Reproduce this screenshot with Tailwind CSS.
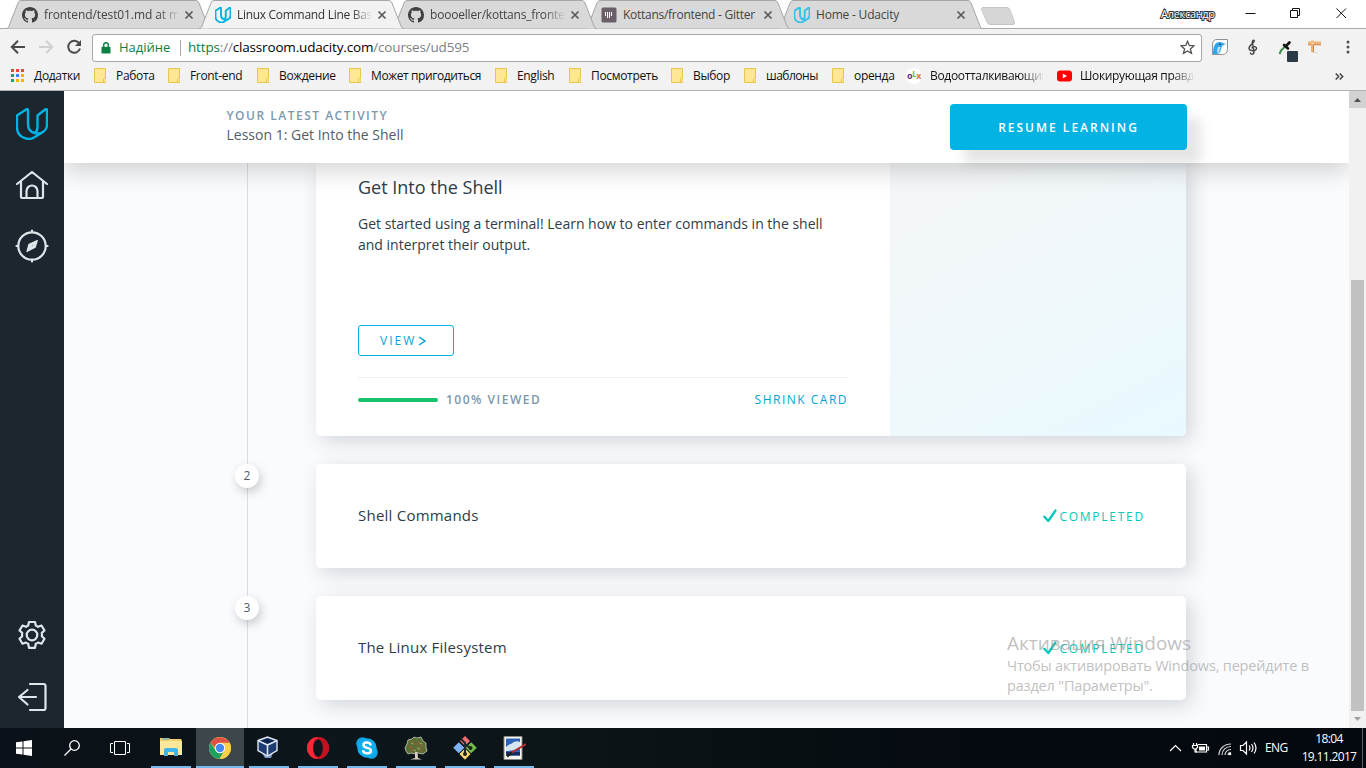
<!DOCTYPE html>
<html lang="uk">
<head>
<meta charset="utf-8">
<title>Linux Command Line Basics</title>
<script src="https://cdn.jsdelivr.net/npm/@tailwindcss/browser@4"></script>
</head>
<body class="w-[1366px] h-[768px] overflow-hidden font-['Open_Sans','Noto_Sans',sans-serif] bg-white text-black">
<svg class="hidden">
  <defs>
    <symbol id="tab" viewBox="0 0 205 29"><path d="M0 28.5 C2 28.5 2 28 3 26 L12 3 Q13 .5 15 .5 H190 Q192 .5 193 3 L202 26 C203 28 203 28.500 205 28.500" stroke="#a6a6a6"/></symbol>
    <symbol id="x" viewBox="0 0 10 10"><path d="M1.500 1.500 L8.500 8.500 M8.500 1.500 L1.500 8.500" stroke="#5a5a5a" stroke-width="1.700" fill="none"/></symbol>
    <symbol id="gh" viewBox="0 0 16 16"><path fill="#404040" d="M8 0C3.580 0 0 3.580 0 8c0 3.540 2.290 6.530 5.470 7.590.4.070.55-.17.55-.38 0-.19-.01-.82-.01-1.490-2.010.37-2.530-.49-2.690-.94-.09-.23-.48-.94-.82-1.130-.28-.15-.68-.52-.01-.53.63-.01 1.080.58 1.230.82.72 1.210 1.870.87 2.330.66.070-.52.28-.87.51-1.070-1.780-.2-3.640-.89-3.640-3.950 0-.87.31-1.590.82-2.150-.08-.2-.36-1.020.08-2.120 0 0 .67-.21 2.200.82.64-.18 1.320-.27 2-.27s1.360.09 2 .27c1.530-1.040 2.200-.82 2.200-.82.44 1.100.16 1.920.08 2.120.51.56.82 1.270.82 2.150 0 3.070-1.870 3.750-3.650 3.950.29.25.54.73.54 1.480 0 1.070-.01 1.930-.01 2.200 0 .21.15.46.55.38A8.010 8.010 0 0 0 16 8c0-4.420-3.580-8-8-8z"/></symbol>
    <symbol id="ud" viewBox="0 0 32 32"><path fill="none" stroke-linejoin="round" d="M1 7.500 L10.500 1.200 Q12 .6 12 2.200 V16 C12 21 14.500 24 18.500 25 C20.500 24 21.500 22 21.500 19 V7.500 L29.500 1.200 Q31 .6 31 2.200 V17 C31 20 29.500 22.500 27 24 L18 29.500 C15.500 31 12 31.300 9 30.200 C4 28.500 1 24.500 1 19.500 Z M18.500 25 C22 25.800 25 25.300 27 24"/></symbol>
    <symbol id="folder" viewBox="0 0 12 15"><path d="M.5 .5 H11.500 V10 L12 11 V14.500 H.5 Z" fill="#ffe793" stroke="#e9c54c"/><path d="M9.500 14 V11 Q9.500 10 11.500 10" fill="#fff0b5" stroke="#e9c54c"/></symbol>
    <symbol id="check" viewBox="0 0 14 14"><path d="M1.300 7.800 L5.300 12 L12.500 1.500" fill="none" stroke="#02c8ba" stroke-width="2.300" stroke-linecap="round" stroke-linejoin="round"/></symbol>
  </defs>
</svg>
<div class="relative flex h-full flex-col">

  <!-- Tab strip -->
  <div class="relative flex h-[29px] shrink-0 bg-white pl-[6px] text-[12px] text-[#444]">
    <div class="absolute inset-x-0 bottom-0 h-px bg-[#a9a9a9]"></div>
    <div class="relative z-[5] flex w-[193px] items-center pl-4">
      <svg class="absolute left-0 top-0 h-[29px] w-[205px]" fill="#d9d9d9"><use href="#tab"/></svg>
      <svg class="relative size-4 shrink-0"><use href="#gh"/></svg>
      <span class="relative ml-1.5 w-[134px] overflow-hidden whitespace-nowrap tracking-[-0.1px] [mask-image:linear-gradient(90deg,#000_114px,transparent_136px)]">frontend/test01.md at master</span>
      <svg class="relative ml-[6px] size-[10px] shrink-0"><use href="#x"/></svg>
    </div>
    <div class="relative z-[9] flex w-[193px] items-center pl-4 text-[#333]">
      <svg class="absolute left-0 top-0 h-[29px] w-[205px]" fill="#f2f2f2"><use href="#tab"/></svg>
      <svg class="relative size-4 shrink-0" stroke="#02b3e4" stroke-width="3.800"><use href="#ud"/></svg>
      <span class="relative ml-1.5 w-[134px] overflow-hidden whitespace-nowrap tracking-[-0.3px] [mask-image:linear-gradient(90deg,#000_114px,transparent_136px)]">Linux Command Line Basics</span>
      <svg class="relative ml-[6px] size-[10px] shrink-0"><use href="#x"/></svg>
    </div>
    <div class="relative z-[4] flex w-[193px] items-center pl-4">
      <svg class="absolute left-0 top-0 h-[29px] w-[205px]" fill="#d9d9d9"><use href="#tab"/></svg>
      <svg class="relative size-4 shrink-0"><use href="#gh"/></svg>
      <span class="relative ml-1.5 w-[134px] overflow-hidden whitespace-nowrap tracking-[-0.2px] [mask-image:linear-gradient(90deg,#000_114px,transparent_136px)]">boooeller/kottans_frontend</span>
      <svg class="relative ml-[6px] size-[10px] shrink-0"><use href="#x"/></svg>
    </div>
    <div class="relative z-[3] flex w-[193px] items-center pl-4">
      <svg class="absolute left-0 top-0 h-[29px] w-[205px]" fill="#d9d9d9"><use href="#tab"/></svg>
      <svg class="relative size-4 shrink-0" viewBox="0 0 16 16"><rect x=".5" y=".5" width="15" height="15" rx="1.500" fill="#6b5f69"/><path d="M4.500 5V9 M6.500 5V11 M8.500 5V11 M10.500 5V9" stroke="#fff"/></svg>
      <span class="relative ml-1.5 w-[134px] overflow-hidden whitespace-nowrap tracking-[-0.27px]">Kottans/frontend - Gitter</span>
      <svg class="relative ml-[6px] size-[10px] shrink-0"><use href="#x"/></svg>
    </div>
    <div class="relative z-[2] flex w-[205px] items-center pl-4">
      <svg class="absolute left-0 top-0 h-[29px] w-[205px]" fill="#d9d9d9"><use href="#tab"/></svg>
      <svg class="relative size-4 shrink-0" stroke="#35c0ea" stroke-width="3.800"><use href="#ud"/></svg>
      <span class="relative ml-1.5 w-[134px] overflow-hidden whitespace-nowrap tracking-[-0.2px]">Home - Udacity</span>
      <svg class="relative ml-[6px] size-[10px] shrink-0"><use href="#x"/></svg>
    </div>
    <svg class="mt-[7px] -ml-[2px] h-[18px] w-[35px]" viewBox="0 0 35 18"><path d="M2 .5 H26 Q28 .5 29 3 L33.500 15 Q34 17.500 32 17.500 H9 Q7 17.500 6 15 L.8 3 Q0 .5 2 .5Z" fill="#d6d6d6" stroke="#c6c6c6"/></svg>
    <div class="ml-[145px] mt-[6px] h-4 w-[56px] text-[11px] leading-4 tracking-[-0.3px] text-white [-webkit-text-stroke:2px_#333] [paint-order:stroke_fill]">Александр</div>
    <svg class="ml-[28px] mt-[7px] h-3 w-[104px]" viewBox="0 0 104 12" fill="none" stroke="#111"><path d="M.5 6.500H10.500 M45.500 3.500h7v7h-7z M47.500 3V1.500h7v7H53 M91.500 1.500l9.500 9.500 M101 1.500l-9.500 9.500"/></svg>
  </div>

  <!-- Address bar -->
  <div class="flex h-[37px] shrink-0 items-center bg-[#f2f2f2] pl-[10px]">
    <svg class="-mt-[2px] h-4 w-[72px]" viewBox="0 0 72 16" fill="none" stroke-width="2"><path d="M15 8H2 M8 1.800 L1.800 8 L8 14.200" stroke="#4a4a4a"/><path d="M29 8H42 M36 1.800 L42.200 8 L36 14.200" stroke="#d0d0d0"/><path d="M69.300 4.500 A6 6 0 1 0 70 9.500" stroke="#4a4a4a"/><path d="M71 1 V7 H65Z" fill="#4a4a4a"/></svg>
    <div class="ml-[10px] flex h-[28px] w-[1110px] items-center rounded-[3px] border border-[#a8a8a8] bg-white text-[13.5px]">
      <svg class="ml-[8px] h-3 w-[10px]" viewBox="0 0 10 12"><path d="M2.700 5V3a2.300 2.300 0 0 1 4.600 0v2" fill="none" stroke="#0b8043" stroke-width="1.400"/><path d="M.5 4.800h9V11.500H.5z" fill="#0b8043"/></svg>
      <span class="ml-2 w-[52px] whitespace-nowrap text-[13px] text-[#0b8043]">Надійне</span>
      <span class="ml-[9px] h-4 w-px bg-[#aaa]"></span>
      <span class="ml-[7px] whitespace-nowrap tracking-[-0.17px] text-black"><span class="text-[#0b8043]">https</span><span class="text-[#808080]">://</span>classroom.udacity.com<span class="text-[#808080]">/courses/ud595</span></span>
      <svg class="ml-auto mr-[6px] size-[15px]" viewBox="0 0 15 15"><path d="M7.500 1.300 L9.300 5.500 L13.900 5.900 L10.400 8.900 L11.500 13.400 L7.500 11 L3.500 13.400 L4.600 8.900 L1.100 5.900 L5.700 5.500Z" fill="none" stroke="#505050" stroke-width="1.300"/></svg>
    </div>
    <svg class="ml-[9px] -mt-[2px] size-[18px]" viewBox="0 0 18 18"><path d="M6 1.500H16.500V11.500Q16 16.500 11.500 16.500H1.500V6Q2 1.500 6 1.500Z" fill="#fff" stroke="#8a9399"/><path d="M2 16 C2 8 4 4 8.500 4 C11 4 12 5.500 15.500 6 C12.500 6.500 11 7.500 10.500 9.500 C10 13 8.500 15 7 16 Z" fill="#35a5e8"/><path d="M7 9 Q9 8.500 9.500 9 Q9 13 6.500 16 Q5.500 12 7 9Z" fill="#bfe2f5"/><circle cx="9" cy="6.300" r=".8" fill="#123"/></svg>
    <svg class="ml-[18px] -mt-[2px] h-4 w-3" viewBox="0 0 12 16" fill="none" stroke="#444" stroke-width="1.400"><path d="M5.500 5.500 C4.500 2 6.500 .3 7.200 1.500 C8 4 2 6 2 9 C2 12.500 9.500 12.500 9.500 9.500 C9.500 7 5 7 5 9.500 M5.700 5 L7 13 C7 16 3 15.500 3.500 13.500"/></svg>
    <svg class="ml-[19px] mt-1.5 h-[22px] w-[22px]" viewBox="0 0 22 22"><path d="M1.500 14 L3 10.500 L8.500 5" stroke="#3f8a50" stroke-width="2" fill="none"/><path d="M6 5 L10 8.500 M8.500 5.500 L11.500 2.500" stroke="#111" stroke-width="2.600" stroke-linecap="round"/><rect x="9" y="11" width="11" height="11" rx="1" fill="#2b3a47"/></svg>
    <svg class="ml-[7px] -mt-[2px] size-[15px]" viewBox="0 0 15 15"><path d="M1 2.500h3V1.500h3v1h7v3.500H7V13H4V6H1z" fill="#eeb277"/><path d="M1 5.800h3M7 5.800h7M6.500 6v7" stroke="#cf8a4c"/><circle cx="5.500" cy="4" r="1" fill="#fbdcb6"/><path d="M5 13.500h5" stroke="#ddd5cc"/></svg>
    <svg class="ml-[24px] -mt-[1px] h-[14px] w-1" viewBox="0 0 4 14" fill="#505050"><circle cx="2" cy="2" r="1.500"/><circle cx="2" cy="7" r="1.500"/><circle cx="2" cy="12" r="1.500"/></svg>
  </div>

  <!-- Bookmarks -->
  <div class="flex h-[25px] shrink-0 border-b border-[#b2b2b2] bg-[#f2f2f2] pb-[5px] pl-[11px] text-[12px] leading-[19px] tracking-[-0.33px] whitespace-nowrap text-[#111]">
    <div class="flex w-[83px] items-center"><svg class="h-[13px] w-[13px]" viewBox="0 0 13 13"><path d="M0 1.500h3m2 0h3m2 0h3" stroke="#e8453c" stroke-width="3"/><path d="M0 6.500h3M0 11.500h3" stroke="#1da261" stroke-width="3"/><path d="M5 6.500h3" stroke="#4285f4" stroke-width="3"/><path d="M10 6.500h3M5 11.500h3m2 0h3" stroke="#f4b400" stroke-width="3"/></svg><span class="ml-[10px]">Додатки</span></div>
    <div class="flex w-[74px] items-center gap-[10px]"><svg class="h-[15px] w-3"><use href="#folder"/></svg>Работа</div>
    <div class="flex w-[89px] items-center gap-[10px]"><svg class="h-[15px] w-3"><use href="#folder"/></svg>Front-end</div>
    <div class="flex w-[92px] items-center gap-[10px]"><svg class="h-[15px] w-3"><use href="#folder"/></svg>Вождение</div>
    <div class="flex w-[146px] items-center gap-[10px] tracking-[-0.4px]"><svg class="h-[15px] w-3"><use href="#folder"/></svg>Может пригодиться</div>
    <div class="flex w-[74px] items-center gap-[10px]"><svg class="h-[15px] w-3"><use href="#folder"/></svg>English</div>
    <div class="flex w-[102px] items-center gap-[10px]"><svg class="h-[15px] w-3"><use href="#folder"/></svg>Посмотреть</div>
    <div class="flex w-[73px] items-center gap-[10px]"><svg class="h-[15px] w-3"><use href="#folder"/></svg>Выбор</div>
    <div class="flex w-[88px] items-center gap-[10px] tracking-[-0.5px]"><svg class="h-[15px] w-3"><use href="#folder"/></svg>шаблоны</div>
    <div class="flex w-[74px] items-center gap-[10px]"><svg class="h-[15px] w-3"><use href="#folder"/></svg>оренда</div>
    <div class="flex w-[151px] items-center"><span class="flex size-4 items-center justify-center rounded-full bg-white text-[9px] font-bold tracking-[-0.4px]"><span class="text-[#612c8c]">o</span><span class="-mt-1 text-[8px] text-[#7db928]">L</span><span class="text-[#f17723]">x</span></span><span class="ml-2 w-[113px] overflow-hidden [mask-image:linear-gradient(90deg,#000_92px,transparent_115px)]">Водоотталкивающий</span></div>
    <div class="flex w-[278px] items-center"><svg class="h-3 w-[15px]" viewBox="0 0 15 12"><rect y=".5" width="15" height="11" rx="3" fill="#f00"/><path d="M5.800 3.500v5L10 6z" fill="#fff"/></svg><span class="ml-2 w-[113px] overflow-hidden [mask-image:linear-gradient(90deg,#000_92px,transparent_115px)]">Шокирующая правда</span></div>
    <svg class="mt-[7px] h-[7px] w-[9px]" viewBox="0 0 9 7" fill="none" stroke="#444" stroke-width="1.500"><path d="M.7.5l3 3-3 3 M4.700.5l3 3-3 3"/></svg>
  </div>

  <!-- Page -->
  <div class="flex h-[637px] shrink-0">
    <nav class="flex w-16 shrink-0 flex-col items-center bg-[#1c262e] text-[#dfe6ea]">
      <svg class="mt-[17px] size-8 overflow-visible" stroke="#02b3e4" stroke-width="2.400"><use href="#ud"/></svg>
      <svg class="mt-[30px] h-[30px] w-[34px]" viewBox="0 0 34 30" fill="none" stroke="currentColor" stroke-width="2.200" stroke-linecap="round" stroke-linejoin="round"><path d="M2 14 L17 2 L32 14 M6 11.500 V27 Q6 28 7 28 H27 Q28 28 28 27 V11.500 M11.500 28 V21 a5.500 5.500 0 0 1 11 0 V28"/></svg>
      <svg class="mt-[29px] size-[34px]" viewBox="0 0 34 34" fill="none" stroke="currentColor" stroke-width="2.200" stroke-linecap="round"><circle cx="17" cy="17" r="13.700"/><path d="M17 1.500V3M17 31v1.500M1.500 17H3M31 17h1.500"/><path fill-rule="evenodd" d="M22.300 11.500 L20.200 18.300 L12 22.500 L14 15.200Z M19 15.200 L15.800 16.500 L17.800 18.300Z" fill="currentColor" stroke-linejoin="round" stroke-width="1.200"/></svg>
      <svg class="mt-auto mb-[32px] size-[30px]" viewBox="0 0 30 30" fill="none" stroke="currentColor" stroke-width="2.200" stroke-linejoin="round"><path d="M12 2 h6 l.8 3.500 q1.200 .5 2.200 1.300 l3.500 -1.300 l3 5 l-2.700 2.300 q.4 2 0 3.400 l2.700 2.500 l-3 5 l-3.500 -1.200 q-1 .8 -2.200 1.300 l-.8 4 h-6 l-.8 -4 q-1.200 -.5 -2.200 -1.300 l-3.500 1.200 l-3 -5 l2.700 -2.500 q-.4 -1.700 0 -3.400 l-2.700 -2.300 l3 -5 l3.500 1.300 q1 -.8 2.200 -1.300Z"/><circle cx="15" cy="15" r="5.300"/></svg>
      <svg class="mb-[16px] size-[30px]" viewBox="0 0 30 30" fill="none" stroke="currentColor" stroke-width="2.200" stroke-linecap="round" stroke-linejoin="round"><path d="M13 2H26.500Q28.500 2 28.500 4V26Q28.500 28 26.500 28H13 M19 15H2 M10.500 8 L2 15 L10.500 22.500"/></svg>
    </nav>

    <main class="flex min-w-0 flex-1 flex-col overflow-hidden bg-[#fafbfd]">
      <header class="relative z-10 flex h-[72px] shrink-0 justify-between bg-white pl-[162.5px] pr-[162px] shadow-[0_8px_24px_rgba(0,0,0,0.17)]">
        <div class="pt-[17px]">
          <div class="text-[12px] leading-4 font-semibold tracking-[1.5px] text-[#7d97ad]">YOUR LATEST ACTIVITY</div>
          <div class="mt-[1px] text-[14px] leading-5 text-[#525c65]">Lesson 1: Get Into the Shell</div>
        </div>
        <div class="mt-[13px] flex h-[46px] w-[237px] items-center justify-center rounded-[4px] bg-[#02b3e4] pt-[1px] text-[12px] font-semibold tracking-[2px] text-white shadow-[14px_14px_12px_rgba(0,0,0,0.1)]">RESUME LEARNING</div>
      </header>
      <div class="flex flex-1">
        <div class="relative ml-[171px] flex w-6 flex-col items-center">
          <div class="absolute inset-y-0 left-[12px] w-px bg-[#dbdee1]"></div>
          <div class="relative mt-[301px] flex size-6 items-center justify-center rounded-full bg-white text-[12px] text-[#525c65] shadow-[2px_4px_10px_rgba(46,60,73,0.25)]">2</div>
          <div class="relative mt-[108px] flex size-6 items-center justify-center rounded-full bg-white text-[12px] text-[#525c65] shadow-[2px_4px_10px_rgba(46,60,73,0.25)]">3</div>
        </div>
        <div class="ml-[57px] flex w-[870px] flex-col gap-7">
          <section class="flex h-[273px] overflow-hidden rounded-b-[5px] bg-white shadow-[5px_5px_20px_rgba(46,60,73,0.2)]">
            <div class="flex w-[574px] flex-col pl-[42px] pr-[42px]">
              <h2 class="mt-[12px] text-[18px] leading-6 text-[#2e3d49]">Get Into the Shell</h2>
              <p class="mt-[14px] w-[490px] text-[14px] leading-[21px] text-[#2e3d49]">Get started using a terminal! Learn how to enter commands in the shell<br>and interpret their output.</p>
              <div class="mt-[70px] flex h-[31px] w-24 items-center rounded-[3px] border border-[#02b3e4] pl-[21px] text-[12px] font-medium tracking-[2px] text-[#02a4d8]">VIEW<svg class="ml-[2px] mt-[1px] h-[10px] w-[8px]" viewBox="0 0 8 10"><path d="M1 1l6 4-6 4" fill="none" stroke="#02a4d8" stroke-width="1.500"/></svg></div>
              <div class="mt-[21px] flex w-[490px] items-center border-t border-[#edeff1] pt-[14px] text-[12px] leading-4 tracking-[1.5px]">
                <span class="h-1 w-20 rounded-full bg-[#15c26b]"></span>
                <span class="ml-2 font-semibold text-[#7d97ad]">100% VIEWED</span>
                <span class="ml-auto text-[#02a4d8]">SHRINK CARD</span>
              </div>
            </div>
            <div class="flex-1 bg-[linear-gradient(152deg,#f5f7f8_0%,#f0f7fa_45%,#eef8fb_60%,#e8f9ff_100%)]"></div>
          </section>
          <section class="flex h-[104px] items-center justify-between rounded-[5px] bg-white px-[42px] shadow-[5px_5px_20px_rgba(46,60,73,0.2)]">
            <h2 class="-mt-[2px] text-[15px] tracking-[0.23px] text-[#2e3d49]">Shell Commands</h2>
            <div class="flex items-center gap-[2px] text-[12px] tracking-[1.75px] text-[#02c8ba]"><svg class="size-[14px]"><use href="#check"/></svg><span class="-mr-[1px] mt-[1px] font-medium">COMPLETED</span></div>
          </section>
          <section class="flex h-[104px] items-center justify-between rounded-[5px] bg-white px-[42px] shadow-[5px_5px_20px_rgba(46,60,73,0.2)]">
            <h2 class="-mt-[2px] text-[15px] tracking-[0.2px] text-[#2e3d49]">The Linux Filesystem</h2>
            <div class="flex items-center gap-[2px] text-[12px] tracking-[1.75px] text-[#02c8ba]"><svg class="size-[14px]"><use href="#check"/></svg><span class="-mr-[1px] mt-[1px] font-medium">COMPLETED</span></div>
          </section>
        </div>
      </div>
    </main>

    <!-- Scrollbar -->
    <div class="flex w-[17px] shrink-0 flex-col items-center bg-[#f1f1f1]">
      <div class="flex h-[17px] w-full items-center justify-center bg-[#d2d2d2]"><svg class="h-1 w-[7px]" viewBox="0 0 7 4"><path d="M0 4L3.500 0 7 4z" fill="#505050"/></svg></div>
      <div class="mt-[172px] h-[431px] w-[13px] bg-[#c1c1c1]"></div>
      <svg class="mt-[6px] h-1 w-[7px]" viewBox="0 0 7 4"><path d="M0 0L3.500 4 7 0z" fill="#a0a0a0"/></svg>
    </div>
  </div>

  <!-- Taskbar -->
  <div class="flex h-10 shrink-0 bg-[linear-gradient(90deg,#0a1118_0%,#0c161b_25%,#0c1518_40%,#050b10_70%,#03090e_100%)] text-white">
    <div class="flex w-12 items-center justify-center"><svg class="size-4" viewBox="0 0 16 16" fill="#fff"><path d="M0 2.300L6.500 1.400V7.500H0zM7.500 1.200L16 0V7.500H7.500zM0 8.500H6.500V14.600L0 13.700zM7.500 8.500H16V16L7.500 14.800z"/></svg></div>
    <div class="flex w-12 items-center justify-center"><svg class="size-4" viewBox="0 0 16 16" fill="none" stroke="#fff" stroke-width="1.300"><circle cx="10.500" cy="5.500" r="4.800"/><path d="M7 9L.5 15.500"/></svg></div>
    <div class="flex w-12 items-center justify-center"><svg class="h-[14px] w-5" viewBox="0 0 20 14" fill="none" stroke="#fff"><path d="M4.500.5h11v13h-11z M3 2.500H.5v9H3 M17 2.500h2.500v9H17"/></svg></div>
    <div class="flex flex-1">
      <div class="ml-[7px] flex h-10 w-10 items-center justify-center border-b-2 border-[#76b9ed]"><svg class="size-[22px]" viewBox="0 0 22 22"><path d="M0 2h9l1 1h11.500v16H0z" fill="#f5cf69"/><path d="M0 5h22v14H0z" fill="#ffe69d"/><path d="M2 3h7" stroke="#37a6de"/><path d="M4 20v-6q0-2 2-2h10q2 0 2 2v6h-4v-4H8v4z" fill="#3eb5ea"/></svg></div>
      <div class="ml-[5px] flex h-10 w-12 items-center justify-center border-b-2 border-[#76b9ed] bg-[#3c474c]"><svg class="mt-[2px] size-[22px]" viewBox="0 0 22 22"><circle cx="11" cy="11" r="11" fill="#fbd147"/><path d="M11 11L6.500 13.600 1.500 5.500A11 11 0 0 0 10.500 22L15.500 13.500z" fill="#1da15f"/><path d="M11 5.800H20.600A11 11 0 0 1 10.500 22L15.500 13.500z" fill="#fbd147"/><path d="M11 11H6L1.500 5.500A11 11 0 0 1 20.500 5.800H11z" fill="#de5145"/><circle cx="11" cy="11" r="5.200" fill="#fff"/><circle cx="11" cy="11" r="4.200" fill="#4688f1"/></svg></div>
      <div class="ml-[5px] flex h-10 w-10 items-center justify-center border-b-2 border-[#76b9ed] pr-1"><svg class="h-[23px] w-[21px]" viewBox="0 0 21 23"><path d="M5 17h11l-2 5H8z" fill="#7f9ac7"/><path d="M1 4.500L10.500 1 20 4.500v10L10.500 20 1 14.500z" fill="#1d3c70" stroke="#dfe7f3" stroke-width="1.400"/><path d="M1 4.500L10.500 9 20 4.500M10.500 9v11" fill="none" stroke="#dfe7f3" stroke-width="1.600"/><path d="M4 5L10.500 2.800 17 5 10.500 7.500z" fill="#0d2349"/></svg></div>
      <div class="ml-[9px] flex h-10 w-10 items-center justify-center border-b-2 border-[#76b9ed]"><svg class="mt-[2px] size-[22px]" viewBox="0 0 22 22"><circle cx="11" cy="11" r="11" fill="#e11b2c"/><path d="M11 0a11 11 0 0 1 0 22z" fill="#c01322"/><path d="M11 0A11 11 0 0 0 11 22C5 20 4 2 11 0z" fill="#fb2637"/><ellipse cx="11" cy="11" rx="4.800" ry="8.800" fill="#0c161b"/></svg></div>
      <div class="ml-[9px] flex h-10 w-10 items-center justify-center border-b-2 border-[#76b9ed]"><svg class="mt-[2px] size-[22px]" viewBox="0 0 22 22"><circle cx="6.500" cy="6.500" r="6.300" fill="#0fa5e5"/><circle cx="15.500" cy="15.500" r="6.300" fill="#0fa5e5"/><circle cx="11" cy="11" r="9.700" fill="#10aeef"/><path d="M14.500 7.500C13.500 5 7.500 4.700 7.500 8c0 3.800 7.500 2 7.500 5.800 0 3.500-7 3.200-7.800.4" fill="none" stroke="#fff" stroke-width="2.500" stroke-linecap="round"/></svg></div>
      <div class="ml-[9px] flex h-10 w-10 items-center justify-center border-b-2 border-[#76b9ed]"><svg class="mt-[2px] size-6" viewBox="0 0 24 24"><path d="M1 12l2-4 1-4 4-1 2-2 3 1 4-1 2 4 3 2 0 4 1 4-4 3-5-1-3 1-4-1-3 1-2-3z" fill="#5b6e35" stroke="#c8cdb8" stroke-width=".8"/><path d="M5 10l3 2M9 5l2 4M15 5l-2 4M19 9l-4 2M6 15l4-2M18 15l-3-2" stroke="#995f37" stroke-width="1.200"/><path d="M7 7l2 1M13 12l3 1M16 7l2 1M10 14l2 1" stroke="#93a960" stroke-width="1.300"/><path d="M11 16h2.500l.5 6 4 1.500H6l5-1.500z" fill="#d8cdbd"/></svg></div>
      <div class="ml-[9px] flex h-10 w-10 items-center justify-center border-b-2 border-[#76b9ed]"><svg class="mt-[2px] size-6" viewBox="0 0 24 24"><path d="M12 0l5 5-5 5-5-5z" fill="#ec6f73"/><path d="M5.800 6.300l5.500 5.500-5.500 5.500L.2 11.800z" fill="#80b3f6"/><path d="M18.200 6.300l5.600 5.500-5.600 5.500-5.500-5.500z" fill="#72bd4a"/><path d="M12 12.500l5.500 5.500-5.500 5.700L6.500 18z" fill="#f8d96f"/><path d="M8 3l4 4v11M12 8l5 4" stroke="#222a2c" stroke-width="2" fill="none"/><circle cx="12" cy="18" r="2" fill="#222"/><circle cx="17.500" cy="12" r="2" fill="#222"/></svg></div>
      <div class="ml-[9px] flex h-10 w-10 items-center justify-center border-b-2 border-[#76b9ed]"><svg class="mt-[1px] size-6" viewBox="0 0 24 24"><path d="M2 .5h18v23H2z" fill="#f7f7f2" stroke="#888"/><path d="M4 2.500h14v17H4z" fill="#2c62ba"/><path d="M4 11q3-3 5-3 4-4 9-2v6q-6 3-14 3z" fill="#d5e6f3"/><path d="M4 16h14v3.500H4z" fill="#142e61"/><path d="M9 17l4-2.500L24 8" stroke="#b92d31" stroke-width="2" fill="none"/><path d="M5 20.500l5-4" stroke="#222" stroke-width="2.500"/></svg></div>
    </div>
    <svg class="mt-3 h-4 w-[88px]" viewBox="0 0 88 16" fill="none" stroke="#fff" stroke-width="1.200"><path d="M1 11l5.500-5.500L12 11"/><path d="M28.500 4.500h9v7.500H27v-3 M38 7h1.500v3H38"/><path d="M30 6.500h6v4h-6z" fill="#fff" stroke="none"/><path d="M24.500 3v2M27.500 3v2M23.500 5.500h5v2l-1.500 1.500h-2l-1.500-1.500zM26 9v3h2"/><path d="M50 15C50 9 55 4 62 4 M53 15c0-5 4-8.500 9-8.500 M56 15c0-3 2.500-5.500 6-5.500 M59 15c0-1.500 1-2.500 3-2.500" stroke="#d6d6d6"/><circle cx="61" cy="14" r="1.300" fill="#fff" stroke="none"/><path d="M71.500 5.500H74l3.500-3.500v12L74 10.500h-2.500zM80 5.500q2 2.500 0 5M82.500 4q3 4 0 8M85 2.500q4 5.500 0 11"/></svg>
    <div class="ml-[8px] w-[31px] text-[12px] leading-10 tracking-[-0.6px]">ENG</div>
    <div class="w-[66px] pt-[2px] text-center text-[12px] leading-[18px] tracking-[-0.65px]">18:04<br>19.11.2017</div>
    <div class="w-[4px] border-l border-[#5b6265]"></div>
  </div>

  <!-- Activation watermark -->
  <div class="absolute left-[1007px] top-[631px] z-20 whitespace-nowrap text-[#9b9b9b]/65">
    <div class="text-[19px] leading-6 tracking-[-0.03px]">Активация Windows</div>
    <div class="mt-[1px] text-[14.5px] leading-5 tracking-[-0.17px]">Чтобы активировать Windows, перейдите в<br>раздел "Параметры".</div>
  </div>
</div>
</body>
</html>
